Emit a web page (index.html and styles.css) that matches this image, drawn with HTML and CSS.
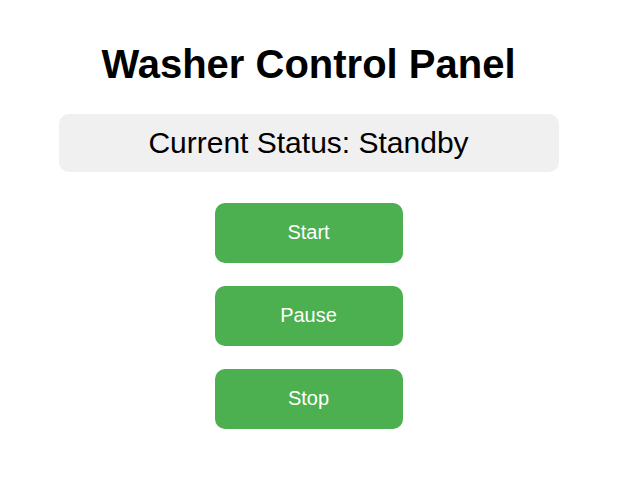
FILE: index.html
```html
<!DOCTYPE html>
<html>
<head>
<meta charset="utf-8">
<title>Washer Control Panel</title>
<link rel="stylesheet" href="styles.css">
</head>
<body>
<div class="page">
  <h1 class="title">Washer Control Panel</h1>
  <div class="status">Current Status: <span class="status-value">Standby</span></div>
  <div class="controls">
    <button class="btn">Start</button>
    <button class="btn">Pause</button>
    <button class="btn">Stop</button>
  </div>
</div>
</body>
</html>
```
FILE: styles.css
```css
html, body {
  margin: 0;
  padding: 0;
  background: #ffffff;
}
body {
  font-family: "Liberation Sans", Arial, sans-serif;
  color: #000;
}
.page {
  width: 617px;
  padding-top: 41px;
  display: flex;
  flex-direction: column;
  align-items: center;
}
.title {
  margin: 0;
  font-size: 40px;
  line-height: 46px;
  font-weight: bold;
}
.status {
  margin-top: 27px;
  width: 500px;
  box-sizing: border-box;
  padding: 12px 0;
  font-size: 30px;
  line-height: 34px;
  text-align: center;
  background: #f0f0f0;
  border-radius: 10px;
}
.controls {
  margin-top: 31px;
  display: flex;
  flex-direction: column;
  align-items: center;
  gap: 23px;
}
.btn {
  width: 188px;
  height: 60px;
  border: none;
  border-radius: 10px;
  background: #4caf50;
  color: #fff;
  font-family: "Liberation Sans", Arial, sans-serif;
  font-size: 20px;
  padding: 0 0 2px 0;
  cursor: pointer;
}
```
